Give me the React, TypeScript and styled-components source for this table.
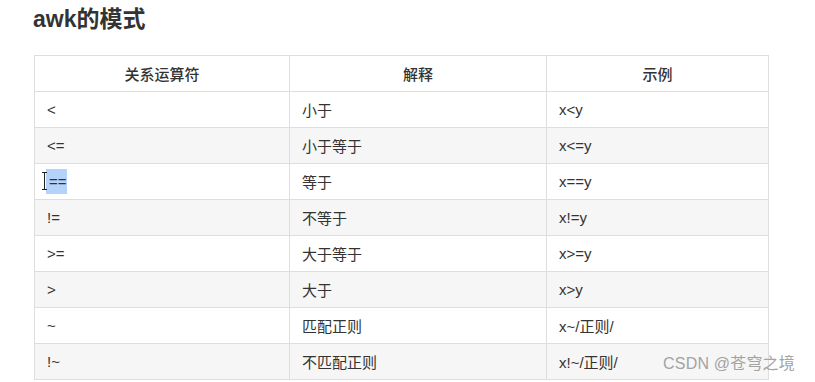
import React from "react";
import styled, { createGlobalStyle } from "styled-components";

const Global = createGlobalStyle`
  html, body { margin: 0; padding: 0; background: #fff; }
  body { font-family: "Liberation Sans", "Noto Sans CJK SC", sans-serif; color: #333; }
`;

const Page = styled.div`
  position: relative;
  width: 815px;
  height: 382px;
  overflow: hidden;
  padding: 5px 0 0 33px;
  box-sizing: border-box;
`;

const Title = styled.h2`
  margin: 0 0 21px 0;
  font-size: 23px;
  line-height: 29px;
  font-weight: 700;
  color: #333;
  font-family: "Liberation Sans", "Noto Sans CJK SC", sans-serif;
`;

const Table = styled.table`
  border-collapse: collapse;
  table-layout: fixed;
  width: 731px;
  margin-left: 1px;
  font-size: 15px;
  color: #333;
`;

const Th = styled.th<{ $w: number }>`
  width: ${(p) => p.$w}px;
  height: 35px;
  padding: 0;
  border: 1px solid #dedede;
  font-weight: 500;
  text-align: center;
  background: #fff;
  font-family: "Liberation Sans", "Noto Sans CJK SC", sans-serif;
`;

const Tr = styled.tr<{ $alt: boolean }>`
  background: ${(p) => (p.$alt ? "#f6f6f6" : "#fff")};
`;

const Td = styled.td`
  height: 35px;
  padding: 0 0 0 12px;
  border: 1px solid #dedede;
  text-align: left;
  font-family: "Liberation Sans", "Noto Sans CJK SC", sans-serif;
`;

const Selected = styled.span`
  position: relative;
  display: inline-block;
  background: #b4d3fb;
  padding: 4px 0 4px 3px;
  margin-left: -1px;
`;

const Caret = styled.span`
  position: absolute;
  left: -5px;
  top: 3px;
  width: 7px;
  height: 18px;
  &::before {
    content: "";
    position: absolute;
    left: 3px;
    top: 1px;
    width: 1px;
    height: 16px;
    background: #222;
  }
  &::after {
    content: "";
    position: absolute;
    left: 1px;
    top: 0;
    width: 5px;
    height: 16px;
    border-top: 1px solid #222;
    border-bottom: 1px solid #222;
  }
`;

const Watermark = styled.div`
  position: absolute;
  left: 663px;
  top: 350px;
  font-size: 16px;
  color: #a3a3a3;
  letter-spacing: 0.2px;
  font-family: "Liberation Sans", "Noto Sans CJK SC", sans-serif;
`;

const rows: [React.ReactNode, string, string][] = [
  ["<", "小于", "x<y"],
  ["<=", "小于等于", "x<=y"],
  [
    <Selected key="s">
      ==
      <Caret />
    </Selected>,
    "等于",
    "x==y",
  ],
  ["!=", "不等于", "x!=y"],
  [">=", "大于等于", "x>=y"],
  [">", "大于", "x>y"],
  ["~", "匹配正则", "x~/正则/"],
  ["!~", "不匹配正则", "x!~/正则/"],
];

export default function App() {
  return (
    <Page>
      <Global />
      <Title>awk的模式</Title>
      <Table>
        <thead>
          <tr>
            <Th $w={254}>关系运算符</Th>
            <Th $w={256}>解释</Th>
            <Th $w={221}>示例</Th>
          </tr>
        </thead>
        <tbody>
          {rows.map((r, i) => (
            <Tr key={i} $alt={i % 2 === 1}>
              <Td>{r[0]}</Td>
              <Td>{r[1]}</Td>
              <Td>{r[2]}</Td>
            </Tr>
          ))}
        </tbody>
      </Table>
      <Watermark>CSDN @苍穹之境</Watermark>
    </Page>
  );
}
